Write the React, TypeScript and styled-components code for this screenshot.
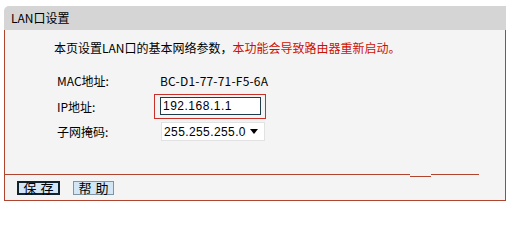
import styled, { createGlobalStyle } from "styled-components";

const GlobalStyle = createGlobalStyle`
  html, body {
    margin: 0;
    padding: 0;
    background: #ffffff;
  }
  body {
    font-family: "Noto Sans CJK SC", "Liberation Sans", sans-serif;
    font-size: 12px;
    color: #000000;
  }
`;

const LINE = "#b0452f";

const Panel = styled.div`
  margin: 6px 1px 0 4px;
  width: 502px;
`;

const Header = styled.div`
  height: 24px;
  line-height: 24px;
  padding-left: 7px;
  background: #d5d5d5;
  border-top-left-radius: 5px;
`;

const Body = styled.div`
  background: #f4f4f4;
  border-left: 1px solid ${LINE};
  border-right: 1px solid ${LINE};
  border-bottom: 1px solid ${LINE};
  display: flex;
  flex-direction: column;
`;

const Intro = styled.p`
  margin: 11px 0 0 49px;
  height: 14px;
  line-height: 14px;
  font-size: 12px;
`;

const Warn = styled.span`
  color: #cc1100;
`;

const Form = styled.div`
  margin-top: 15px;
  padding-left: 52px;
  display: flex;
  flex-direction: column;
`;

const Row = styled.div<{ $h: number; $gap?: number }>`
  height: ${(p) => p.$h}px;
  margin-top: ${(p) => p.$gap ?? 0}px;
  display: flex;
  align-items: center;
`;

const Label = styled.div`
  width: 97px;
  flex: none;
`;

const Value = styled.div`
  padding-left: 6px;
  letter-spacing: 0.2px;
`;

const Highlight = styled.div`
  border: 1px solid #c8302a;
  padding: 2px 4px 3px 5px;
  display: flex;
`;

const Input = styled.input`
  width: 101px;
  height: 18px;
  box-sizing: border-box;
  border: 1px solid #1f3c4a;
  background: #ffffff;
  padding: 0 2px;
  font-family: "Liberation Sans", Arial, sans-serif;
  font-size: 12px;
  letter-spacing: 0.5px;
  outline: none;
`;

const Select = styled.div`
  margin-left: 7px;
  width: 104px;
  height: 19px;
  box-sizing: border-box;
  border: 1px solid #e2e2e2;
  background: #ffffff;
  display: flex;
  align-items: center;
  justify-content: space-between;
  padding: 0 6px 0 2px;
  font-family: "Liberation Sans", Arial, sans-serif;
  font-size: 12px;
  letter-spacing: 0.4px;
`;

const Divider = styled.div`
  margin-top: 32px;
  height: 3px;
  display: flex;
  align-items: flex-start;
`;

const Segment = styled.div<{ $w: number; $drop?: number }>`
  width: ${(p) => p.$w}px;
  height: 1px;
  margin-top: ${(p) => p.$drop ?? 0}px;
  background: ${LINE};
`;

const Footer = styled.div`
  height: 19px;
  padding: 4px 0 0 12px;
  display: flex;
  align-items: flex-start;
  gap: 13px;
`;

const Button = styled.button<{ $focus?: boolean }>`
  height: 14px;
  width: ${(p) => (p.$focus ? 43 : 41)}px;
  box-sizing: border-box;
  padding: 0 0 0 4px;
  background: #d3e6f6;
  border: ${(p) => (p.$focus ? "2px solid #14242e" : "1px solid #7f95a6")};
  font-family: "Noto Sans CJK SC", sans-serif;
  font-size: 13px;
  line-height: 12px;
  letter-spacing: 4px;
  white-space: nowrap;
  color: #000000;
  display: flex;
  align-items: center;
  justify-content: center;
`;

function Arrow() {
  return (
    <svg width="8" height="5" viewBox="0 0 8 5">
      <path d="M0 0 L8 0 L4 5 Z" fill="#000" />
    </svg>
  );
}

export default function App() {
  return (
    <>
      <GlobalStyle />
      <Panel>
        <Header>LAN口设置</Header>
        <Body>
          <Intro>
            本页设置LAN口的基本网络参数，<Warn>本功能会导致路由器重新启动。</Warn>
          </Intro>
          <Form>
            <Row $h={20}>
              <Label>MAC地址:</Label>
              <Value>BC-D1-77-71-F5-6A</Value>
            </Row>
            <Row $h={26} $gap={3}>
              <Label>IP地址:</Label>
              <Highlight>
                <Input defaultValue="192.168.1.1" />
              </Highlight>
            </Row>
            <Row $h={21} $gap={2}>
              <Label>子网掩码:</Label>
              <Select>
                <span>255.255.255.0</span>
                <Arrow />
              </Select>
            </Row>
          </Form>
          <Divider>
            <Segment $w={405} />
            <Segment $w={21} $drop={2} />
            <Segment $w={48} />
          </Divider>
          <Footer>
            <Button $focus>保存</Button>
            <Button>帮助</Button>
          </Footer>
        </Body>
      </Panel>
    </>
  );
}
